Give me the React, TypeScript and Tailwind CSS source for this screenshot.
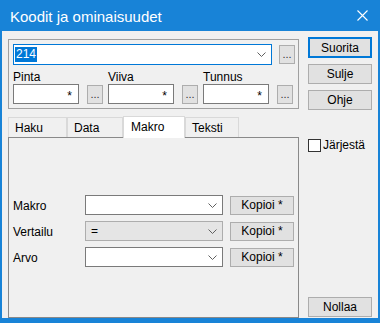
import React from "react";

const font = { fontFamily: '"Liberation Sans", Arial, sans-serif' };

function Chevron() {
  return (
    <svg width="9" height="5" viewBox="0 0 9 5" className="shrink-0">
      <path d="M0.5 0.5 L4.5 4.5 L8.5 0.5" fill="none" stroke="#606060" strokeWidth="1" />
    </svg>
  );
}

function DotsButton({ className = "" }: { className?: string }) {
  return (
    <div className={"w-[16px] h-[19px] bg-[#e1e1e1] border border-[#adadad] flex items-end justify-center pb-[3px] text-[11px] leading-none text-[#333] " + className}>
      ...
    </div>
  );
}

function Button({ label, focused = false, className = "" }: { label: string; focused?: boolean; className?: string }) {
  return (
    <div
      className={
        "w-[64px] h-[20px] bg-[#e1e1e1] flex items-center justify-center text-[12px] text-black " +
        (focused ? "border-2 border-[#0078d7] " : "border border-[#adadad] ") +
        className
      }
    >
      {label}
    </div>
  );
}

function StarInput() {
  return (
    <div className="w-[66px] h-[20px] bg-white border border-[#7a7a7a] flex items-center justify-end pr-[6px] text-[12px] leading-none">
      <span className="mt-[3px]">*</span>
    </div>
  );
}

function Combo({ value = "", disabled = false }: { value?: string; disabled?: boolean }) {
  return (
    <div
      className={
        "w-[138px] h-[20px] border flex items-center justify-between pl-[5px] pr-[5px] text-[12px] " +
        (disabled ? "bg-[#e5e5e5] border-[#adadad]" : "bg-white border-[#7a7a7a]")
      }
    >
      <span>{value}</span>
      <Chevron />
    </div>
  );
}

function Tab({ label, selected = false, w }: { label: string; selected?: boolean; w: string }) {
  if (selected) {
    return (
      <div className={"relative z-10 h-[22px] -mb-[1px] bg-white border border-b-0 border-[#d9d9d9] pl-[7px] pt-[1px] text-[12px] " + w}>
        {label}
      </div>
    );
  }
  return (
    <div className={"h-[20px] bg-[#f0f0f0] border border-b-0 border-[#d9d9d9] pl-[6px] pt-[3px] text-[12px] leading-[14px] " + w}>
      {label}
    </div>
  );
}

function Row({ label, value, disabled }: { label: string; value?: string; disabled?: boolean }) {
  return (
    <div className="flex items-center h-[20px]">
      <div className="w-[76px] pl-[4px] text-[12px] pt-[2px]">{label}</div>
      <Combo value={value} disabled={disabled} />
      <div className="ml-[7px] w-[64px] h-[19px] bg-[#e1e1e1] border border-[#adadad] flex items-center justify-center text-[12px]">
        Kopioi *
      </div>
    </div>
  );
}

export default function App() {
  return (
    <div style={font} className="w-[380px] h-[323px] bg-[#1883d7] flex flex-col px-[2px] pb-[5px] text-black">
      <div className="h-[31px] flex items-center justify-between pl-[8px] pr-[10px] shrink-0">
        <span className="text-white text-[15px] leading-none mt-[1px]">Koodit ja ominaisuudet</span>
        <svg width="11" height="11" viewBox="0 0 11 11">
          <path d="M0.5 0.5 L10.5 10.5 M10.5 0.5 L0.5 10.5" stroke="white" strokeWidth="1.1" />
        </svg>
      </div>
      <div className="flex-1 bg-[#f0f0f0] flex pl-[6px] pt-[6px]">
        {/* left column */}
        <div className="w-[291px] flex flex-col">
          <div className="mt-[2px] h-[70px] border border-[#a0a0a0] pl-[4px] pt-[4px] flex flex-col">
            <div className="flex items-center">
              <div className="w-[259px] h-[21px] bg-white border border-[#0078d7] flex items-center justify-between pl-[1px] pr-[5px] text-[12px]">
                <span className="bg-[#0078d7] text-white px-[1px] leading-[15px]">214</span>
                <Chevron />
              </div>
              <DotsButton className="ml-[7px]" />
            </div>
            <div className="flex mt-[6px]">
              {["Pinta", "Viiva", "Tunnus"].map((l) => (
                <div key={l} className="w-[96px] flex flex-col">
                  <div className="text-[12px] leading-[13px] h-[13px]">{l}</div>
                  <div className="flex items-end">
                    <StarInput />
                    <DotsButton className="ml-[8px]" />
                  </div>
                </div>
              ))}
            </div>
          </div>
          <div className="mt-[6px] flex items-end h-[22px]">
            <Tab label="Haku" w="w-[59px]" />
            <Tab label="Data" w="w-[56px]" />
            <Tab label="Makro" selected w="w-[62px]" />
            <Tab label="Teksti" w="w-[54px]" />
          </div>
          <div className="h-[181px] border border-[#898989] bg-[#f0f0f0] flex flex-col gap-[6px] pt-[57px]">
            <Row label="Makro" />
            <Row label="Vertailu" value="=" disabled />
            <Row label="Arvo" />
          </div>
        </div>
        {/* right column */}
        <div className="ml-[9px] flex flex-col">
          <Button label="Suorita" focused className="h-[21px]" />
          <Button label="Sulje" className="mt-[6px]" />
          <Button label="Ohje" className="mt-[6px]" />
          <div className="mt-[26px] flex items-center">
            <div className="w-[13px] h-[13px] bg-white border border-[#333]" />
            <span className="ml-[2px] text-[12px]">Järjestä</span>
          </div>
          <div className="flex-1" />
          <Button label="Nollaa" className="h-[19px] mb-[1px]" />
        </div>
      </div>
    </div>
  );
}
